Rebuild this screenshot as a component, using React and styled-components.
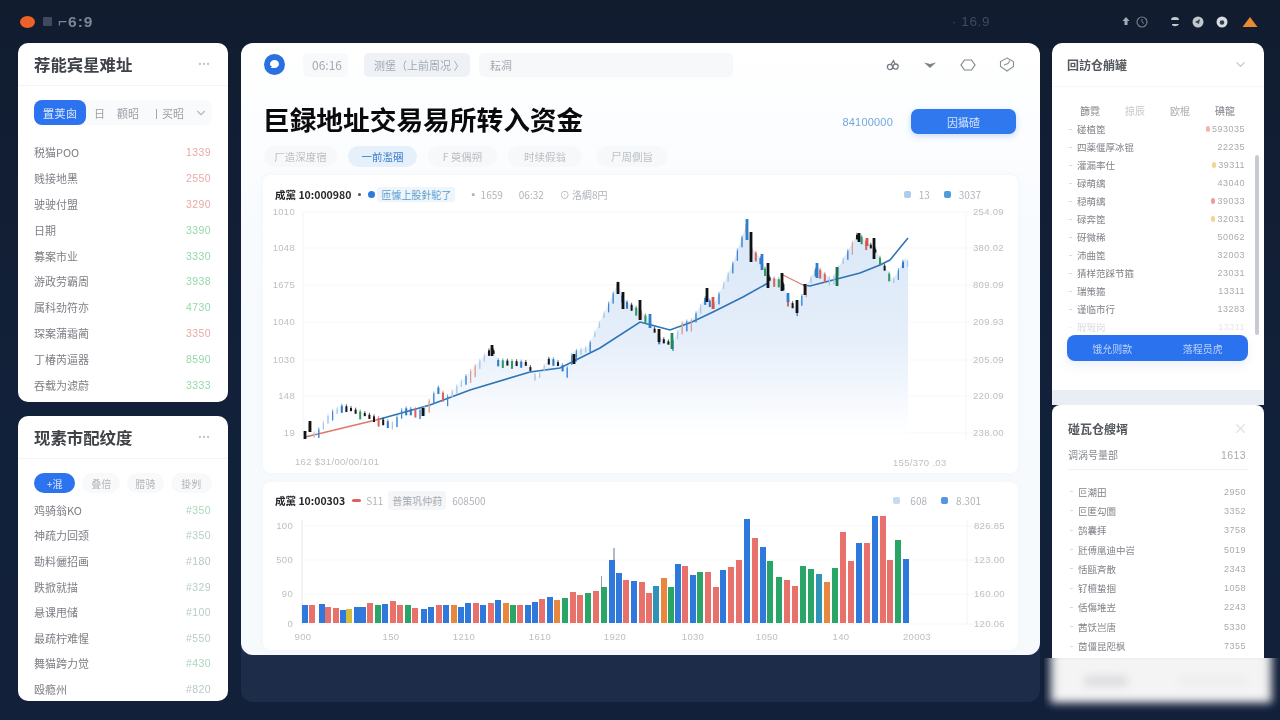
import React from 'react';
import styled, { createGlobalStyle } from 'styled-components';
import { ChevronDown, X, MoreHorizontal } from 'lucide-react';

const Global = createGlobalStyle`
  html, body { margin: 0; padding: 0; width: 1280px; height: 720px; overflow: hidden; background: #101c31; }
  * { box-sizing: border-box; }
  body { font-family: "Noto Sans CJK SC", "Noto Sans", sans-serif; }
`;

const Page = styled.div`
  width: 1280px; height: 720px; overflow: hidden;
  background: linear-gradient(180deg, #111c2f 0%, #12213a 60%, #12203a 100%);
  display: flex; flex-direction: column;
`;
const TopBar = styled.header`
  height: 43px; flex: none; display: flex; align-items: center; padding: 0 21px 0 20px;
`;
const Dot = styled.span`
  width: 15px; height: 12px; border-radius: 50%; background: #f0612a; margin-right: 8px; filter: blur(.3px);
`;
const Square = styled.i`
  width: 9px; height: 9px; background: #3e4a5e; margin-right: 6px; border-radius: 1px; filter: blur(.7px);
`;
const Dim = styled.span`
  font: 700 15.5px "Liberation Sans", sans-serif; letter-spacing: 1px; color: #7d8798; filter: blur(.6px);
`;
const DimCenter = styled(Dim)`
  font-weight: 400; font-size: 13.5px; letter-spacing: .6px; color: #3d4a60; margin-left: auto; margin-right: 132px;
`;
const TopIcons = styled.div`
  display: flex; align-items: center; gap: 10px; filter: blur(.3px);
`;
const TopSvg = styled.svg`
  margin-left: ${p => p.$ml || 0}px; margin-right: ${p => p.$mr || 0}px; display: block;
`;
const Main = styled.main`
  display: flex; padding-left: 18px; align-items: flex-start;
`;
const LeftCol = styled.div`
  width: 210px; flex: none; display: flex; flex-direction: column; gap: 14px; margin-right: 13px;
`;
const Panel = styled.section`
  height: ${p => p.$h}px; background: #fff; border-radius: 10px; padding: 0 16px; overflow: hidden;
`;
const SideHead = styled.div`
  height: ${p => p.$h || 43}px; display: flex; align-items: center; justify-content: space-between;
  margin: 0 -16px; padding: 0 17px 0 16px; border-bottom: 1px solid #f3f4f6;
`;
const SideTitle = styled.h2`
  margin: 0; font-size: 16.4px; font-weight: 700; color: #3f4348; filter: blur(.6px); white-space: nowrap;
`;
const Segment = styled.div`
  margin-top: 14px; height: 25px; border-radius: 8px; background: #f9fafb; display: flex; align-items: center;
  font-size: 11px; color: #9a9ea5; margin-bottom: 14px;
`;
const SegActive = styled.span`
  width: 52px; height: 25px; border-radius: 8px; background: #2d72ee; color: #dce8fd;
  display: flex; align-items: center; justify-content: center; font-size: 11.5px; filter: blur(.3px);
`;
const SegItem = styled.span`
  margin-left: ${p => p.$ml}px; filter: blur(.6px); white-space: nowrap;
`;
const SegChevron = styled(ChevronDown)`
  margin-left: auto; margin-right: 4px; color: #b6bac0;
`;
const Row = styled.div`
  height: ${p => p.$h}px; display: flex; align-items: center; justify-content: space-between;
  font-size: 11px; padding-right: 1px; color: #7c7f85;
`;
const RowName = styled.span`
  filter: blur(.6px); white-space: nowrap;
`;
const RowVal = styled.span`
  font: 10.5px "Liberation Sans", sans-serif; letter-spacing: .4px; color: ${p => p.$c}; filter: blur(.6px);
`;
const PillRow = styled.div`
  display: flex; margin-top: 14px; height: 20px; margin-bottom: 4px; gap: 7px;
`;
const Pill = styled.span`
  width: ${p => p.$w}px; height: 20px; border-radius: 10px; font-size: 10px; display: flex; align-items: center; justify-content: center;
  background: ${p => (p.$on ? '#2d72ee' : '#f8f9fa')}; color: ${p => (p.$on ? '#e0ebfe' : '#b3b6ba')}; filter: blur(.3px);
`;

const CenterShell = styled.div`
  width: 799px; height: 659px; flex: none; border-radius: 12px; background: #1d2c49; margin-right: 12px;
`;
const CenterPanel = styled.section`
  height: 612px; border-radius: 12px; padding: 0 22px; background: linear-gradient(180deg, #fff 0%, #f8fbfe 30%, #f7fafd 100%);
`;
const CenterBar = styled.div`
  height: 43px; display: flex; align-items: center; padding-left: 1px;
`;
const Logo = styled.span`
  width: 21px; height: 21px; border-radius: 50%; background: #2a70e0; display: flex; align-items: center; justify-content: center; margin-right: 18px; flex: none;
`;
const Chip = styled.span`
  height: 24px; width: ${p => p.$w}px; margin-right: ${p => p.$mr}px; border-radius: 5px; background: ${p => p.$bg}; color: #a4a9b0;
  display: flex; align-items: center; padding-left: ${p => p.$pl}px; font-size: ${p => p.$fs || 11}px; white-space: nowrap;
`;
const BlurText = styled.span`
  filter: blur(.6px);
`;
const BarIcons = styled.div`
  margin-left: auto; display: flex; gap: 23px; align-items: center; padding-right: 3px;
`;
const TitleRow = styled.div`
  height: 60px; display: flex; align-items: center; padding-left: 0; padding-right: 2px; padding-top: 11px;
`;
const Title = styled.h1`
  margin: -4px 0 0; font-size: 26.7px; font-weight: 700; color: #0a0a0c; white-space: nowrap; line-height: 1; filter: blur(.35px);
`;
const Amount = styled.span`
  margin-left: auto; margin-right: 18px; font: 11px "Liberation Sans", sans-serif; letter-spacing: .2px; color: #77a6de; filter: blur(.5px);
`;
const CTA = styled.button`
  width: 105px; height: 25px; border: none; border-radius: 7px; background: #2f78ee; color: #d3e3fc; font: 11px "Noto Sans CJK SC", sans-serif;
  box-shadow: 0 2px 6px rgba(47,120,238,.25); padding: 0;
`;
const Tabs = styled.div`
  display: flex; height: 21px; padding-left: 1px; margin-bottom: 8px;
`;
const Tab = styled.span`
  width: ${p => p.$w}px; margin-right: ${p => p.$mr}px; height: 21px; border-radius: 11px; font-size: 10.5px;
  background: ${p => (p.$on ? '#e5f0fb' : '#f6f8fa')}; color: ${p => (p.$on ? '#3f7fcc' : '#bcc0c5')};
  display: flex; align-items: center; justify-content: center; white-space: nowrap;
`;
const ChartCard = styled.div`
  background: #fff; border-radius: 8px; margin-bottom: ${p => p.$mb}px; height: ${p => p.$h}px; overflow: hidden; box-shadow: 0 0 6px rgba(220,230,240,.25);
`;
const ChartHead = styled.div`
  height: ${p => p.$h}px; display: flex; align-items: center; padding: 0 37px 0 12px; font-size: 10px; color: #b0b4ba; padding-top: ${p => p.$pt}px;
`;
const ChartName = styled.b`
  font-size: 10.5px; font-weight: 700; color: #26282c; margin-right: 7px; white-space: nowrap; filter: blur(.3px);
`;
const Bullet = styled.i`
  width: ${p => p.$w || 7}px; height: ${p => p.$hh || 7}px; border-radius: ${p => p.$r || 4}px; background: ${p => p.$c}; margin-right: ${p => p.$mr || 3}px; flex: none;
`;
const Tag = styled.span`
  height: ${p => p.$h}px; padding: 0 4px; background: ${p => p.$bg}; color: ${p => p.$c}; display: flex; align-items: center; border-radius: 3px; white-space: nowrap; margin-right: ${p => p.$mr}px;
`;
const Faint = styled.span`
  margin-right: ${p => p.$mr || 0}px; margin-left: ${p => p.$ml || 0}px; filter: blur(.6px); white-space: nowrap;
`;
const Spacer = styled.span`
  flex: 1;
`;
const ChartSvg = styled.svg`
  display: block; width: 755px; height: ${p => p.$h}px; filter: blur(.35px);
`;

const RightCol = styled.div`
  width: 212px; flex: none; display: flex; flex-direction: column;
`;
const RightTop = styled.section`
  height: 362px; background: linear-gradient(180deg, #fff 0, #fff 347px, #e9edf4 347px); border-radius: 10px 10px 0 0; padding: 0 15px; position: relative; overflow: hidden;
`;
const RightHead = styled.div`
  height: 44px; margin: 0 -15px; padding: 0 16px 0 15px; border-bottom: 1px solid #f5f6f8; display: flex; align-items: center; justify-content: space-between;
`;
const RightTitle = styled.h3`
  margin: 0; font-size: 12px; font-weight: 700; color: #55585e; filter: blur(.6px); white-space: nowrap;
`;
const ColHead = styled.div`
  display: grid; grid-template-columns: repeat(4, 45px); padding-left: 13px; height: 20px; margin-top: 13px; align-items: center;
  font-size: 10px; color: #85888e;
`;
const ColCell = styled.span`
  filter: blur(.6px); color: ${p => p.$c || '#83868c'};
`;
const TRow = styled.div`
  height: ${p => p.$h}px; display: flex; align-items: center; font-size: 9.5px; color: #808389; padding-right: ${p => p.$pr || 4}px;
  opacity: ${p => (p.$fade ? 0.3 : 1)};
`;
const TMark = styled.i`
  width: 3px; height: 1px; background: #d9dbde; margin: 0 5px 0 2px; flex: none;
`;
const TVal = styled.span`
  margin-left: auto; display: flex; align-items: center; font: 9px "Liberation Sans", sans-serif; letter-spacing: .5px; color: #a9abaf; filter: blur(.6px);
`;
const TDot = styled.i`
  width: 4px; height: 6px; border-radius: 2px; background: ${p => p.$c}; margin-right: 2px;
`;
const Scrollbar = styled.i`
  position: absolute; right: 5px; top: 112px; width: 4px; height: 180px; background: #c7cad0; border-radius: 2px;
`;
const DualButton = styled.div`
  position: absolute; left: 15px; top: 292px; width: 181px; height: 26px; border-radius: 8px; background: #2b72ee; color: #bcd3fa;
  display: grid; grid-template-columns: 1fr 1fr; align-items: center; text-align: center; font-size: 10px; box-shadow: 0 5px 10px rgba(200,215,240,.35);
`;
const RightBottom = styled.section`
  height: 253px; background: #fff; border-radius: 8px 8px 0 0; padding: 0 16px; overflow: hidden;
`;
const BottomHead = styled.div`
  height: 39px; padding-top: 7px; display: flex; align-items: center; justify-content: space-between;
`;
const SubRow = styled.div`
  height: 26px; display: flex; align-items: center; justify-content: space-between; font-size: 10px; color: #85888e; border-bottom: 1px solid #f0f1f3; padding-right: 2px; margin-bottom: 12px; padding-bottom: 4px;
`;
const SmudgeClip = styled.div`
  width: 236px; height: 62px; margin-left: -8px; overflow: hidden;
`;
const Smudge = styled.div`
  width: 222px; height: 53px; margin: -8px 0 0 6px; background: #f4f4f5; filter: blur(4px); display: flex; align-items: center; padding: 8px 24px 0 34px; justify-content: space-between; box-shadow: inset 4px 0 4px #c9c9cc, inset -4px 0 4px #d6d6d8;
`;
const SmudgeBar = styled.i`
  width: ${p => p.$w}px; height: 10px; background: ${p => p.$c}; border-radius: 4px;
`;

const left1 = [['税猫POO', '1339', '#e8aaa6'], ['贱接地黑', '2550', '#e8aaa6'], ['驶驶付盟', '3290', '#e8aaa6'], ['日期', '3390', '#93d9a7'], ['募案市业', '3330', '#93d9a7'], ['游政劳霸周', '3938', '#93d9a7'], ['属科劲符亦', '4730', '#93d9a7'], ['琛案蒲霜蔺', '3350', '#e8aaa6'], ['丁椿芮逼器', '8590', '#93d9a7'], ['吞载为滤蔚', '3333', '#93d9a7']];
const left2 = [['鸡骑翁KO', '#350', '#a7d8bd'], ['神疏力回颈', '#350', '#b8cdc6'], ['勘料儷招画', '#180', '#b8c9c4'], ['跌掀就描', '#329', '#b8cdc6'], ['悬课甩储', '#100', '#b8cdc6'], ['最疏柠难惺', '#550', '#b8cdc6'], ['舞猫跨力觉', '#430', '#a9d4bf'], ['殴瘾州', '#820', '#b8c9c4']];
const right1 = [['碰植箆', '593035', '#f2b5a8'], ['四薬偃厚冰锟', '22235', ''], ['灌漏率仕', '39311', '#f3d68d'], ['碌萌缡', '43040', ''], ['穏萌缡', '39033', '#ef9c94'], ['碌奔箆', '32031', '#f3d68d'], ['砑微稀', '50062', ''], ['沛曲箆', '32003', ''], ['猜样范踩节箍', '23031', ''], ['瑞策箍', '13311', ''], ['谨临市行', '13283', ''], ['瑕瑕岗', '13311', '']];
const right2 = [['叵潮田', '2950'], ['叵匿勾圜', '3352'], ['鹄囊拝', '3758'], ['瓩傅凰迪中岧', '5019'], ['恬甌斉散', '2343'], ['钌檀蛰掴', '1058'], ['佸傷堆岦', '2243'], ['茜饫岂唐', '5330'], ['茵僵昆咫枫', '7355']];

const path = [[305,433],[310,422],[315,435],[330,413],[343,405],[370,415],[393,423],[403,408],[423,410],[438,387],[447,397],[467,375],[492,347],[498,360],[527,362],[537,377],[550,357],[567,368],[573,352],[588,347],[607,307],[618,283],[624,300],[640,310],[650,320],[659,337],[672,343],[682,323],[692,320],[707,295],[713,307],[733,263],[747,223],[751,247],[762,260],[768,277],[782,280],[788,298],[797,308],[805,288],[817,267],[832,280],[837,270],[858,233],[867,242],[874,247],[883,263],[893,280],[905,258],[908,262]];
const ma = [[305,437],[318,434],[380,419],[430,405],[470,390],[530,372],[560,368],[600,348],[640,322],[655,326],[670,330],[692,322],[713,312],[743,297],[768,283],[783,275],[803,285],[810,286],[833,280],[860,273],[880,265],[890,260],[908,238]];
const poly = a => a.map(p => p.join(',')).join(' ');
const interp = x => {
  for (let i = 1; i < path.length; i++) {
    if (x <= path[i][0]) {
      const [a, b] = [path[i - 1], path[i]];
      return a[1] + (b[1] - a[1]) * (x - a[0]) / (b[0] - a[0]);
    }
  }
  return 260;
};
const candles = [];
for (let x = 305, i = 0; x < 908; x += 4.6, i++) {
  const y = interp(x), slope = interp(x + 4.6) - y;
  const r = (Math.sin(i * 12.9898) * 43758.5453) % 1;
  const q = Math.abs(r);
  const rising = slope < -1;
  const color = rising ? (q < .55 ? '#a9c9ea' : q < .85 ? '#3f86d4' : '#d9a08f') : q < .5 ? '#15171a' : q < .7 ? '#2f7bc8' : q < .85 ? '#2f9a5f' : '#d9655a';
  const len = rising ? 4 + q * 8 : 3 + q * 6;
  candles.push({ x, y, w: rising ? 1.2 : 2, len, color, wick: len + 2 });
}
const big = [[751,232,262,'#101214'],[768,263,288,'#101214'],[874,238,259,'#101214'],[782,273,291,'#101214'],[623,292,309,'#101214'],[640,300,320,'#101214'],[707,288,302,'#101214'],[859,233,242,'#101214'],[837,267,286,'#1a6f4a'],[747,219,240,'#2d7fcd'],[817,263,278,'#2d7fcd'],[762,254,270,'#2d7fcd'],[650,314,328,'#2d7fcd'],[672,333,349,'#1f8c56'],[805,284,295,'#15171a'],[867,238,246,'#d9534a'],[713,297,309,'#d9534a'],[659,329,342,'#101214'],[788,293,302,'#2d7fcd'],[797,300,313,'#101214'],[310,421,432,'#101214'],[305,431,439,'#101214'],[492,345,356,'#101214'],[423,408,416,'#101214'],[574,354,364,'#101214'],[618,282,294,'#101214']];

const c = { b: '#2f78dc', r: '#e9716b', g: '#29a568', o: '#e8883f', y: '#d4bd3c', t: '#2f93b8' };
const bars = [[305,18,'b'],[312,18,'r'],[322,19,'b'],[328,16,'r'],[336,15,'r'],[343,13,'b'],[349,14,'y'],[357,16,'b'],[363,16,'b'],[370,20,'r'],[378,18,'g'],[385,19,'b'],[393,22,'r'],[400,18,'r'],[408,18,'g'],[415,15,'r'],[424,14,'b'],[431,16,'b'],[439,18,'r'],[446,18,'b'],[454,18,'o'],[461,16,'b'],[468,20,'b'],[476,20,'r'],[483,18,'b'],[491,20,'r'],[498,23,'b'],[506,20,'o'],[513,18,'g'],[520,18,'r'],[528,18,'b'],[535,21,'b'],[542,24,'r'],[550,26,'b'],[557,23,'o'],[565,25,'g'],[573,31,'r'],[580,28,'r'],[588,30,'g'],[596,32,'r'],[604,36,'g'],[612,63,'b'],[619,50,'b'],[626,43,'r'],[634,42,'b'],[642,41,'r'],[649,30,'r'],[656,37,'t'],[664,45,'o'],[671,36,'g'],[678,59,'b'],[685,57,'r'],[693,48,'b'],[700,51,'g'],[708,51,'r'],[716,36,'r'],[723,53,'b'],[731,56,'r'],[739,63,'r'],[747,104,'b'],[755,85,'r'],[763,76,'b'],[770,62,'g'],[779,46,'g'],[787,43,'r'],[795,37,'r'],[803,57,'g'],[811,54,'g'],[819,49,'t'],[827,41,'o'],[835,55,'g'],[843,91,'r'],[851,62,'r'],[859,80,'b'],[867,80,'r'],[875,110,'b'],[883,110,'r'],[890,63,'r'],[898,83,'g'],[906,64,'b']];

const Axis = ({ x, y, a = 'start', children }) => (
  <text x={x} y={y} textAnchor={a} fontSize="9.5" letterSpacing=".3" fill="#bcc0c4" fontFamily="Liberation Sans, sans-serif">{children}</text>
);

const KChart = () => {
  const gy = [212, 248, 285, 322, 360, 396, 433];
  const ll = ['1010', '1048', '1675', '1040', '1030', '148', '19'];
  const rl = ['254.09', '380.02', '809.09', '209.93', '205.09', '220.09', '238.00'];
  return (
    <ChartSvg $h={265} viewBox="263 205 755 265">
      <defs>
        <linearGradient id="area" gradientUnits="userSpaceOnUse" x1="0" y1="225" x2="0" y2="433">
          <stop offset="0" stopColor="#dbe8f8" />
          <stop offset=".55" stopColor="#e5eefa" />
          <stop offset="1" stopColor="#ffffff" />
        </linearGradient>
      </defs>
      {gy.map(y => <line key={y} x1="303" x2="1005" y1={y} y2={y} stroke="#f6f7f8" />)}
      <line x1="303" x2="303" y1="212" y2="440" stroke="#f2f4f6" />
      <line x1="966" x2="966" y1="212" y2="440" stroke="#f5f6f7" />
      <polygon points={`305,437 ${poly(path.filter(p => p[0] > 305))} 908,433 305,433`} fill="url(#area)" />
      {gy.map((y, i) => <Axis key={y} x="295" y={y + 3} a="end">{ll[i]}</Axis>)}
      {gy.map((y, i) => <Axis key={y} x="973" y={y + 3}>{rl[i]}</Axis>)}
      <polyline points={poly(ma.slice(1, 3))} fill="none" stroke="#e0776a" strokeWidth="1.3" />
      <polyline points={poly(ma.slice(0, 2))} fill="none" stroke="#c9785f" strokeWidth="1.3" />
      <polyline points={poly(ma.slice(2, 15))} fill="none" stroke="#2f74b5" strokeWidth="1.6" />
      <polyline points={poly(ma.slice(15, 17))} fill="none" stroke="#dd7a70" strokeWidth="1.2" />
      <polyline points={poly(ma.slice(16))} fill="none" stroke="#2f74b5" strokeWidth="1.6" />
      {candles.map((k, i) => (
        <g key={i}>
          <line x1={k.x} x2={k.x} y1={k.y - 2} y2={k.y + k.wick - 2} stroke={k.color} strokeWidth=".7" />
          <rect x={k.x - k.w / 2} y={k.y} width={k.w} height={k.len} fill={k.color} />
        </g>
      ))}
      {big.map(([x, a, b, col], i) => <rect key={i} x={x - 1.4} y={a} width="2.8" height={b - a} fill={col} />)}
      <Axis x="295" y="465">162 $31/00/00/101</Axis>
      <Axis x="893" y="466">155/370 .03</Axis>
    </ChartSvg>
  );
};

const VolChart = () => {
  const gy = [526, 560, 594, 624];
  const ll = ['100', '500', '90', '0'];
  const rl = ['826.85', '123.00', '160.00', '120.06'];
  const bl = [[303,'900'],[391,'150'],[464,'1210'],[540,'1610'],[615,'1920'],[693,'1030'],[767,'1050'],[841,'140'],[917,'20003']];
  return (
    <ChartSvg $h={132} viewBox="263 516 755 132">
      {gy.map(y => <line key={y} x1="302" x2="1000" y1={y} y2={y} stroke="#f6f7f8" />)}
      <line x1="302" x2="302" y1="520" y2="625" stroke="#e6e8eb" />
      <line x1="967" x2="967" y1="520" y2="625" stroke="#f3f4f5" />
      {gy.map((y, i) => <Axis key={y} x="293" y={y + 3} a="end">{ll[i]}</Axis>)}
      {gy.map((y, i) => <Axis key={y} x="974" y={y + 3}>{rl[i]}</Axis>)}
      <line x1="614" x2="614" y1="548" y2="562" stroke="#5d7794" strokeWidth="1" />
      <line x1="601.5" x2="601.5" y1="576" y2="590" stroke="#93a0ad" strokeWidth="1" />
      {bars.map(([x, h, k], i) => <rect key={i} x={x - 3} y={623 - h} width="6" height={h} fill={c[k]} />)}
      {bl.map(([x, t]) => <Axis key={x} x={x} y="640" a="middle">{t}</Axis>)}
    </ChartSvg>
  );
};

const LogoMark = () => (
  <Logo>
    <svg width="11" height="11" viewBox="0 0 11 11"><path d="M1 5.2C1 2.8 3 1 5.6 1S10 2.8 10 5s-2 4-4.6 4H1.8L3 7.6C1.8 7 1 6.2 1 5.2Z" fill="#fff" /></svg>
  </Logo>
);

const CloudIcon = () => (
  <svg width="14" height="12" viewBox="0 0 14 12" fill="none" stroke="#777b82" strokeWidth="1.3"><circle cx="4" cy="8" r="2.6" /><circle cx="9.6" cy="7.6" r="2.6" /><path d="M5 5.5 7.5 1.6 9 5" /></svg>
);
const DashIcon = () => (
  <svg width="14" height="8" viewBox="0 0 14 8"><path d="M1 1.5 7 3l6-1.5L7 7Z" fill="#7d8187" /></svg>
);
const DiamondIcon = () => (
  <svg width="16" height="14" viewBox="0 0 16 14" fill="none" stroke="#82868c" strokeWidth="1.2"><path d="M4.5 2h7L15 7l-3.5 5h-7L1 7Z" /></svg>
);
const HexIcon = () => (
  <svg width="16" height="15" viewBox="0 0 16 15" fill="none" stroke="#8d9197" strokeWidth="1.1"><path d="M8 1l6.5 3.5v5L8 14 1.5 9.500v-5Z" /><path d="M5 8l4-1.500 2-3" /></svg>
);

const TopRight = () => (
  <TopIcons>
    <TopSvg $mr={11} width="26" height="14" viewBox="0 0 26 14"><path d="M4 2l3.500 4H5.500v4h-3V6H.5Z" fill="#a6acb5" /><circle cx="20" cy="7" r="5" fill="none" stroke="#717b8a" strokeWidth="1.2" /><path d="M20 4v3l2 1.500" stroke="#717b8a" fill="none" /></TopSvg>
    <TopSvg width="12" height="12" viewBox="0 0 12 12"><path d="M2 4a4 3 0 0 1 8 0H2ZM3 8h7a4 3 0 0 1-7 1Z" fill="#c5cad1" /></TopSvg>
    <TopSvg width="14" height="14" viewBox="0 0 14 14"><circle cx="7" cy="7" r="5.500" fill="#c2c7ce" /><path d="M4 7l5-3-1 5Z" fill="#3b4657" /></TopSvg>
    <TopSvg width="14" height="14" viewBox="0 0 14 14"><circle cx="7" cy="7" r="5.500" fill="#d8dbe0" /><circle cx="7" cy="7.500" r="2.300" fill="#323d4f" /></TopSvg>
    <TopSvg $ml={2} width="18" height="12" viewBox="0 0 18 12"><path d="M9 1l7.500 10h-15Z" fill="#e88a32" /></TopSvg>
  </TopIcons>
);

export default function App() {
  return (
    <Page>
      <Global />
      <TopBar>
        <Dot />
        <Square />
        <Dim>⌐6:9</Dim>
        <DimCenter>· 16.9</DimCenter>
        <TopRight />
      </TopBar>
      <Main>
        <LeftCol>
          <Panel $h={359}>
            <SideHead>
              <SideTitle>荐能宾星难址</SideTitle>
              <MoreHorizontal size={14} color="#c0c3c8" />
            </SideHead>
            <Segment>
              <SegActive>置荚囪</SegActive>
              <SegItem $ml={8}>⽇</SegItem>
              <SegItem $ml={12}>颧昭</SegItem>
              <SegItem $ml={12}>丨买昭</SegItem>
              <SegChevron size={14} />
            </Segment>
            {left1.map(r => (
              <Row key={r[0]} $h={25.9}><RowName>{r[0]}</RowName><RowVal $c={r[2]}>{r[1]}</RowVal></Row>
            ))}
          </Panel>
          <Panel $h={285}>
            <SideHead>
              <SideTitle>现素市配纹度</SideTitle>
              <MoreHorizontal size={14} color="#c0c3c8" />
            </SideHead>
            <PillRow>
              <Pill $w={42} $on>+混</Pill>
              <Pill $w={38}>叠倍</Pill>
              <Pill $w={37}>腊骑</Pill>
              <Pill $w={42}>掛刿</Pill>
            </PillRow>
            {left2.map(r => (
              <Row key={r[0]} $h={25.6}><RowName>{r[0]}</RowName><RowVal $c={r[2]}>{r[1]}</RowVal></Row>
            ))}
          </Panel>
        </LeftCol>

        <CenterShell>
          <CenterPanel>
            <CenterBar>
              <LogoMark />
              <Chip $w={45} $mr={16} $bg="#f7f9fb" $pl={9} $fs={12}><BlurText>06:16</BlurText></Chip>
              <Chip $w={106} $mr={9} $bg="#eef2f6" $pl={10}><BlurText>测堡（上前周况 〉</BlurText></Chip>
              <Chip $w={254} $mr={0} $bg="#f6f8fa" $pl={11}><BlurText>耘凋</BlurText></Chip>
              <BarIcons>
                <CloudIcon />
                <DashIcon />
                <DiamondIcon />
                <HexIcon />
              </BarIcons>
            </CenterBar>
            <TitleRow>
              <Title>巨録地址交易易所转入资金</Title>
              <Amount>84100000</Amount>
              <CTA><BlurText>因攝碴</BlurText></CTA>
            </TitleRow>
            <Tabs>
              <Tab $w={73} $mr={11}><BlurText>厂造深度宿</BlurText></Tab>
              <Tab $w={69} $mr={11} $on><BlurText>一前濫碅</BlurText></Tab>
              <Tab $w={69} $mr={11}><BlurText>F 萸偶朔</BlurText></Tab>
              <Tab $w={74} $mr={15}><BlurText>时续假翁</BlurText></Tab>
              <Tab $w={70} $mr={0}><BlurText>尸周側旨</BlurText></Tab>
            </Tabs>
            <ChartCard $h={298} $mb={9}>
              <ChartHead $h={30} $pt={8}>
                <ChartName>成黨 10:000980</ChartName>
                <Bullet $w={3} $hh={3} $c="#555" $mr={7} />
                <Bullet $c="#2f78dc" $mr={2} />
                <Tag $h={15} $bg="#eef6fb" $c="#5fa0cf" $mr={13}>匝懅上股針駝了</Tag>
                <Faint $mr={16}>▪ 1659</Faint>
                <Faint $mr={16}>06:32</Faint>
                <Faint>⊙ 洛綢8円</Faint>
                <Spacer />
                <Bullet $c="#a9cdec" $r={2} $mr={8} />
                <Faint $mr={14}>13</Faint>
                <Bullet $c="#4f9bdd" $r={2} $mr={8} />
                <Faint>3037</Faint>
              </ChartHead>
              <KChart />
            </ChartCard>
            <ChartCard $h={168} $mb={0}>
              <ChartHead $h={34} $pt={2}>
                <ChartName>成黨 10:00303</ChartName>
                <Bullet $w={9} $hh={3} $c="#e2605c" $mr={5} />
                <Faint $mr={5}>S11</Faint>
                <Tag $h={19} $bg="#f4f6f8" $c="#a9adb3" $mr={6}>普策巩仲荮</Tag>
                <Faint>608500</Faint>
                <Spacer />
                <Bullet $c="#c8daf0" $r={2} $mr={10} />
                <Faint $mr={14}>608</Faint>
                <Bullet $c="#5595e3" $r={2} $mr={8} />
                <Faint>8.301</Faint>
              </ChartHead>
              <VolChart />
            </ChartCard>
          </CenterPanel>
        </CenterShell>

        <RightCol>
          <RightTop>
            <RightHead>
              <RightTitle>回訪仓艄罐</RightTitle>
              <ChevronDown size={15} color="#c4c7cc" />
            </RightHead>
            <ColHead>
              <ColCell>篩霓</ColCell>
              <ColCell $c="#c4c6c9">掠辰</ColCell>
              <ColCell $c="#a8abaf">欧棍</ColCell>
              <ColCell>碘龍</ColCell>
            </ColHead>
            {right1.map((r, i) => (
              <TRow key={r[0]} $h={18} $fade={i === right1.length - 1}>
                <TMark />
                <RowName>{r[0]}</RowName>
                <TVal>{r[2] && <TDot $c={r[2]} />}{r[1]}</TVal>
              </TRow>
            ))}
            <Scrollbar />
            <DualButton><BlurText>饿允则款</BlurText><BlurText>落程员虎</BlurText></DualButton>
          </RightTop>
          <RightBottom>
            <BottomHead>
              <RightTitle>碰瓦仓艘壻</RightTitle>
              <X size={15} color="#e0e2e5" />
            </BottomHead>
            <SubRow><RowName>调涡号量部</RowName><RowVal $c="#a9abaf">1613</RowVal></SubRow>
            {right2.map(r => (
              <TRow key={r[0]} $h={19.3} $pr={2}>
                <TMark />
                <RowName>{r[0]}</RowName>
                <TVal>{r[1]}</TVal>
              </TRow>
            ))}
          </RightBottom>
          <SmudgeClip>
            <Smudge><SmudgeBar $w={44} $c="#dcdcde" /><SmudgeBar $w={70} $c="#eeeeef" /></Smudge>
          </SmudgeClip>
        </RightCol>
      </Main>
    </Page>
  );
}
